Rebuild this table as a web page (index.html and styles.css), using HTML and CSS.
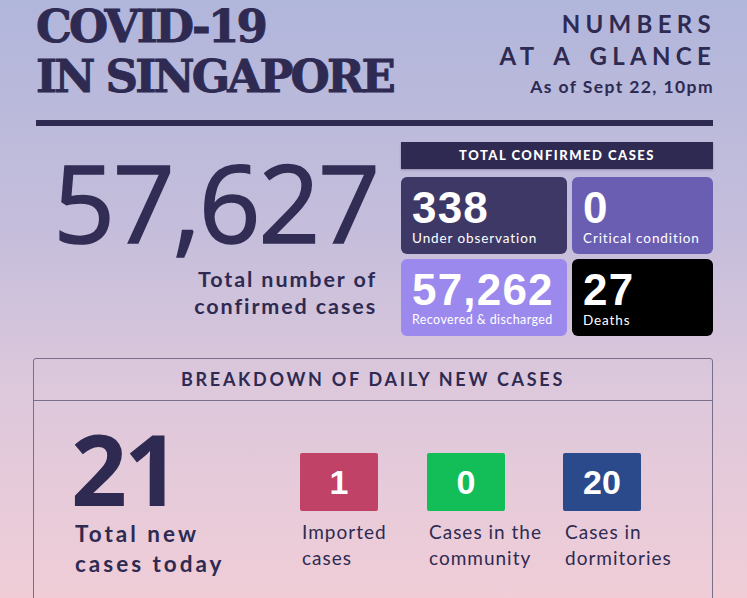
FILE: index.html
```html
<!DOCTYPE html>
<html lang="en">
<head>
<meta charset="utf-8">
<title>COVID-19 in Singapore</title>
<link rel="stylesheet" href="styles.css">
</head>
<body>
<div class="page">
  <header class="header">
    <h1 class="title">COVID-19<br>IN SINGAPORE</h1>
    <div class="glance">
      <div class="glance-title">NUMBERS<br>AT A GLANCE</div>
      <div class="glance-date">As of Sept 22, 10pm</div>
    </div>
  </header>
  <div class="rule"></div>

  <section class="summary">
    <div class="total">
      <div class="total-num">57,627</div>
      <div class="total-label">Total number of<br>confirmed cases</div>
    </div>
    <div class="confirmed">
      <div class="confirmed-head">TOTAL CONFIRMED CASES</div>
      <div class="tiles">
        <div class="tile tile-obs"><div class="tile-num">338</div><div class="tile-label">Under observation</div></div>
        <div class="tile tile-crit"><div class="tile-num">0</div><div class="tile-label">Critical condition</div></div>
        <div class="tile tile-rec"><div class="tile-num">57,262</div><div class="tile-label tile-label-sm">Recovered &amp; discharged</div></div>
        <div class="tile tile-dead"><div class="tile-num">27</div><div class="tile-label">Deaths</div></div>
      </div>
    </div>
  </section>

  <section class="card">
    <div class="card-head">BREAKDOWN OF DAILY NEW CASES</div>
    <div class="card-body">
      <div class="today">
        <div class="today-num">21</div>
        <div class="today-label">Total new<br>cases today</div>
      </div>
      <div class="kinds">
        <div class="kind">
          <div class="kind-box kind-imp">1</div>
          <div class="kind-label">Imported<br>cases</div>
        </div>
        <div class="kind">
          <div class="kind-box kind-com">0</div>
          <div class="kind-label">Cases in the<br>community</div>
        </div>
        <div class="kind">
          <div class="kind-box kind-dorm">20</div>
          <div class="kind-label">Cases in<br>dormitories</div>
        </div>
      </div>
    </div>
  </section>
</div>
</body>
</html>
```

FILE: styles.css
```css
html, body {
  margin: 0;
  padding: 0;
}
body {
  width: 747px;
  height: 598px;
  overflow: hidden;
  background: linear-gradient(180deg, #b1b6db 0%, #c6bedb 40%, #ddc8dc 65%, #f0cdd7 100%);
  color: #2e2a52;
  font-family: Lato, "Noto Sans", sans-serif;
}
.page {
  padding: 2px 34px 0 36px;
}
.header {
  display: flex;
  justify-content: space-between;
  align-items: flex-start;
}
.title {
  margin: 0;
  font-family: "DejaVu Serif", serif;
  font-weight: bold;
  font-size: 45px;
  line-height: 50px;
  letter-spacing: -2.8px;
  color: #2e2a52;
  -webkit-text-stroke: 0.9px #2e2a52;
}
.glance {
  text-align: right;
  padding-top: 6px;
}
.glance-title {
  font-weight: bold;
  font-size: 24px;
  line-height: 32px;
  letter-spacing: 5.3px;
  word-spacing: 4px;
  margin-right: -3px;
}
.glance-date {
  margin-top: 4px;
  font-weight: bold;
  font-size: 17.5px;
  line-height: 22px;
  letter-spacing: 1.4px;
  margin-right: -1px;
}
.rule {
  height: 6px;
  margin-top: 18px;
  background: #2e2a52;
}

.summary {
  display: flex;
  margin-top: 16px;
}
.total {
  flex: 1;
  text-align: right;
  padding-top: 6px;
  padding-right: 23px;
}
.total-num {
  font-family: "Open Sans", "Noto Sans", sans-serif;
  font-weight: 400;
  font-size: 108px;
  line-height: 108px;
  letter-spacing: -2px;
  color: #322d55;
  -webkit-text-stroke: 1.6px #322d55;
}
.total-label {
  margin-top: 10px;
  margin-right: 1px;
  font-weight: bold;
  font-size: 21.5px;
  line-height: 27px;
  letter-spacing: 1.9px;
}
.confirmed {
  width: 312px;
}
.confirmed-head {
  height: 27px;
  line-height: 27px;
  background: #2f2a52;
  color: #fff;
  text-align: center;
  font-weight: 900;
  font-size: 13px;
  letter-spacing: 1.5px;
  box-shadow: 0 1px 2px rgba(40, 30, 70, 0.3);
}
.tiles {
  display: grid;
  grid-template-columns: 166px 141px;
  grid-auto-rows: 77px;
  gap: 5px;
  margin-top: 8px;
}
.tile {
  border-radius: 6px;
  color: #fff;
  padding: 9px 10px 0 11px;
}
.tile-obs { background: #3e3867; }
.tile-crit { background: #6a5eb2; }
.tile-rec { background: #9b89ee; }
.tile-dead { background: #000; }
.tile-num {
  font-family: "Liberation Sans", Arial, sans-serif;
  font-weight: bold;
  font-size: 44px;
  line-height: 44px;
  letter-spacing: 1.2px;
}
.tile-label {
  font-size: 13.5px;
  line-height: 16px;
  letter-spacing: 0.9px;
}
.tile-label-sm {
  font-size: 12.5px;
  letter-spacing: 0.4px;
}

.card {
  margin: 22px 0 0 -3px;
  border: 1px solid #7a6f8a;
  border-radius: 3px;
  height: 300px;
}
.card-head {
  height: 41px;
  line-height: 41px;
  border-bottom: 1px solid #7a6f8a;
  text-align: center;
  font-weight: bold;
  font-size: 18px;
  letter-spacing: 2.7px;
}
.card-body {
  display: flex;
  align-items: flex-start;
  padding: 18px 0 0 37px;
}
.today {
  width: 229px;
}
.today-num {
  font-family: "Open Sans", "Noto Sans", sans-serif;
  font-size: 98px;
  line-height: 98px;
  font-weight: bold;
  letter-spacing: -3px;
  color: #2e2a52;
}
.today-label {
  margin-top: 2px;
  padding-left: 4px;
  font-weight: bold;
  font-size: 22.5px;
  line-height: 30px;
  letter-spacing: 3px;
}
.kinds {
  display: grid;
  grid-template-columns: 127px 136px auto;
  margin-top: 34px;
}
.kind-box {
  width: 78px;
  height: 58px;
  border-radius: 2px;
  color: #fff;
  font-family: "Liberation Sans", Arial, sans-serif;
  font-weight: bold;
  font-size: 34px;
  line-height: 58px;
  text-align: center;
}
.kind-imp { background: #c04266; }
.kind-com { background: #13be58; }
.kind-dorm { background: #2b4a8b; }
.kind-label {
  margin-top: 8px;
  padding-left: 2px;
  font-size: 19px;
  line-height: 26px;
  letter-spacing: 1px;
}
```
